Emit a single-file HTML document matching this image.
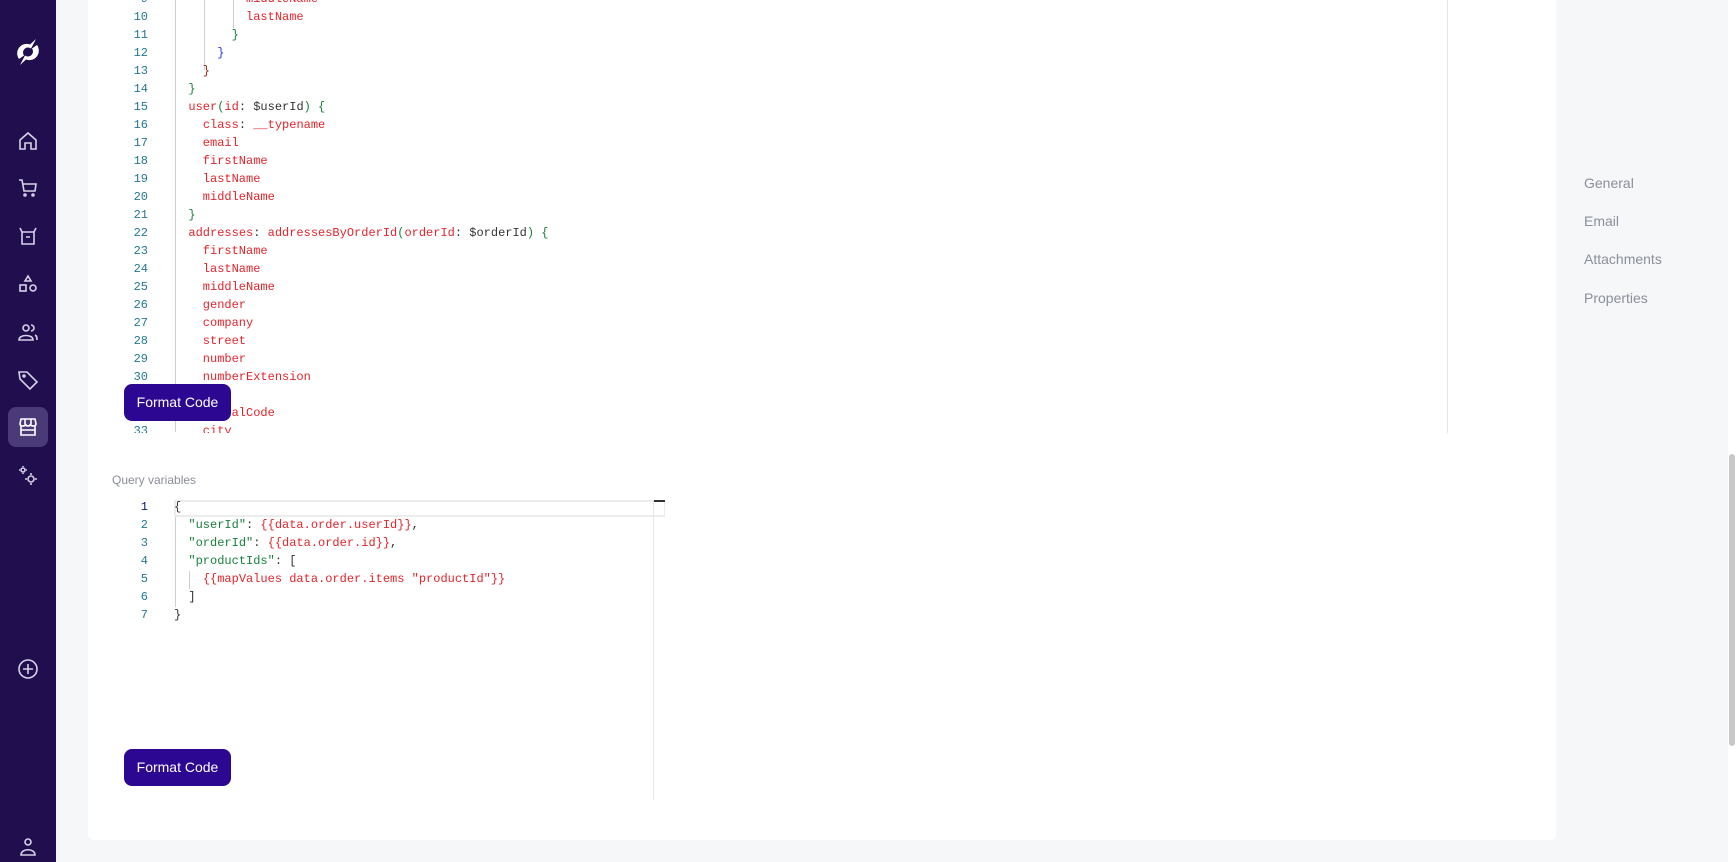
<!DOCTYPE html>
<html><head><meta charset="utf-8"><style>
*{margin:0;padding:0;box-sizing:border-box}
body{width:1736px;height:862px;overflow:hidden;background:#f6f7f9;font-family:"Liberation Sans",sans-serif;position:relative}
#side{position:absolute;left:0;top:0;width:56px;height:862px;background:#200e4f}
.ic{position:absolute;left:16px;width:24px;height:24px}
#card{position:absolute;left:88px;top:0;width:1468px;height:840px;background:#fff;border-radius:0 0 6px 6px}
.code{position:absolute;font-family:"Liberation Mono",monospace;font-size:12px;white-space:pre;line-height:18px}
.ln{position:absolute;left:112px;width:36px;text-align:right;color:#237893;font-family:"Liberation Mono",monospace;font-size:12px;line-height:18px;white-space:pre}
.r{color:#e3242b}.g{color:#16823a}.k{color:#333}.b{color:#2b3ae0}.br{color:#9c2a16}
.btn{position:absolute;left:124px;width:107px;height:37px;background:#2c0892;border-radius:8px;color:#fff;font-size:14px;text-align:center;line-height:37px}
.nav{position:absolute;left:1584px;color:#8b8e9c;font-size:14px}
.guide{position:absolute;width:1px;background:#cfcfcf}
</style></head><body>
<div id="side">
<svg class="ic" style="left:12px;top:36px;width:32px;height:32px" viewBox="0 0 32 32"><path d="M24 3 L18 8.5 A9.5 9.5 0 0 0 7 23 L12 19.5 A5 5 0 0 1 19 12.5 Z M8 29 L14 23.5 A9.5 9.5 0 0 0 25 9 L20 12.5 A5 5 0 0 1 13 19.5 Z" fill="#fff"/></svg>
<svg class="ic" style="top:129px" viewBox="0 0 24 24" fill="none" stroke="#d6d2e6" stroke-width="1.6"><path d="M4 11 L12 4 L20 11 V20 H15 V14 H9 V20 H4 Z"/></svg>
<svg class="ic" style="top:176px" viewBox="0 0 24 24" fill="none" stroke="#d6d2e6" stroke-width="1.6"><path d="M3 4 H6 L8 15 H19 L20 8 H7"/><circle cx="9" cy="19" r="1"/><circle cx="17" cy="19" r="1"/></svg>
<svg class="ic" style="top:224px" viewBox="0 0 24 24" fill="none" stroke="#d6d2e6" stroke-width="1.6"><path d="M4 4 L6 8 H18 L20 4 M6 8 V20 H18 V8 M10 13 H14"/></svg>
<svg class="ic" style="top:272px" viewBox="0 0 24 24" fill="none" stroke="#d6d2e6" stroke-width="1.6"><path d="M12 4 L15 9 H9 Z"/><rect x="4" y="13" width="6" height="6"/><circle cx="17" cy="16" r="3"/></svg>
<svg class="ic" style="top:320px" viewBox="0 0 24 24" fill="none" stroke="#d6d2e6" stroke-width="1.6"><circle cx="10" cy="8" r="3"/><path d="M3 20 C3 14 17 14 17 20 Z M15 5 A3 3 0 0 1 15 11 M19 15 C21 16 21 18 21 20"/></svg>
<svg class="ic" style="top:368px" viewBox="0 0 24 24" fill="none" stroke="#d6d2e6" stroke-width="1.6"><path d="M3 4 H11 L21 14 L14 21 L4 11 Z"/><circle cx="8" cy="8" r="1"/></svg>
<div style="position:absolute;left:8px;top:407px;width:40px;height:40px;border-radius:8px;background:#4a3a78"></div>
<svg class="ic" style="top:415px" viewBox="0 0 24 24" fill="none" stroke="#fff" stroke-width="1.6"><path d="M4 9 L5 4 H19 L20 9 Q20 11 17 11 Q15 11 14.5 9 Q14 11 12 11 Q10 11 9.5 9 Q9 11 7 11 Q4 11 4 9 Z M5 11 V20 H19 V11 M5 15 H19 M9 4 V9 M15 4 V9"/></svg>
<svg class="ic" style="top:464px" viewBox="0 0 24 24" fill="none" stroke="#d6d2e6" stroke-width="1.6"><circle cx="7" cy="6" r="2"/><circle cx="15" cy="15" r="3"/><path d="M15 9 V11 M15 19 V21 M9 15 H11 M19 15 H21 M7 2 V3 M7 9 V10 M3 6 H4 M10 6 H11"/></svg>
<svg class="ic" style="top:657px" viewBox="0 0 24 24" fill="none" stroke="#d6d2e6" stroke-width="1.6"><circle cx="12" cy="12" r="9"/><path d="M12 7 V17 M7 12 H17"/></svg>
<svg class="ic" style="top:835px" viewBox="0 0 24 24" fill="none" stroke="#d6d2e6" stroke-width="1.6"><circle cx="12" cy="7" r="3"/><path d="M5 20 C5 13 19 13 19 20 Z"/></svg>
</div>
<div id="card"></div>

<div class="guide" style="left:175px;top:0;height:432px"></div>
<div class="guide" style="left:204px;top:0;height:70px"></div>
<div class="guide" style="left:233px;top:0;height:28px"></div>
<div style="position:absolute;left:1447px;top:0;width:1px;height:433px;background:#e6e6e6"></div>
<div class="ln" style="top:-10px">9
10
11
12
13
14
15
16
17
18
19
20
21
22
23
24
25
26
27
28
29
30
31
32
33</div>
<div class="code" style="left:174px;top:-10px"><span class="r">          middleName</span>
<span class="r">          lastName</span>
<span class="g">        }</span>
<span class="b">      }</span>
<span class="br">    }</span>
<span class="g">  }</span>
  <span class="r">user</span><span class="g">(</span><span class="r">id</span><span class="k">: $userId</span><span class="g">) {</span>
    <span class="r">class</span><span class="k">: </span><span class="r">__typename</span>
<span class="r">    email</span>
<span class="r">    firstName</span>
<span class="r">    lastName</span>
<span class="r">    middleName</span>
<span class="g">  }</span>
  <span class="r">addresses</span><span class="k">: </span><span class="r">addressesByOrderId</span><span class="g">(</span><span class="r">orderId</span><span class="k">: $orderId</span><span class="g">) {</span>
<span class="r">    firstName</span>
<span class="r">    lastName</span>
<span class="r">    middleName</span>
<span class="r">    gender</span>
<span class="r">    company</span>
<span class="r">    street</span>
<span class="r">    number</span>
<span class="r">    numberExtension</span>
<span class="r">    zip</span>
<span class="r">    postalCode</span>
<span class="r">    city</span></div>
<div style="position:absolute;left:88px;top:433px;width:1468px;height:20px;background:#fff"></div>
<div class="btn" style="top:384px">Format Code</div>

<div style="position:absolute;left:112px;top:473px;font-size:12px;color:#8b8e9c">Query variables</div>

<div style="position:absolute;left:174px;top:500px;width:491px;height:17px;border:2px solid #ececec;border-right-width:1px"></div>
<div style="position:absolute;left:653px;top:500px;width:12px;height:2px;background:#333"></div>
<div style="position:absolute;left:653px;top:500px;width:1px;height:300px;background:#e6e6e6"></div>
<div class="guide" style="left:175px;top:517px;height:90px"></div>
<div class="guide" style="left:189px;top:571px;height:18px"></div>
<div class="ln" style="top:498px"><span style="color:#0b216f">1</span>
2
3
4
5
6
7</div>
<div class="code" style="left:174px;top:498px"><span class="k">{</span>
  <span class="g">"userId"</span><span class="k">: </span><span class="r">{{data.order.userId}}</span><span class="k">,</span>
  <span class="g">"orderId"</span><span class="k">: </span><span class="r">{{data.order.id}}</span><span class="k">,</span>
  <span class="g">"productIds"</span><span class="k">: [</span>
    <span class="r">{{mapValues data.order.items "productId"}}</span>
<span class="k">  ]</span>
<span class="k">}</span></div>
<div class="btn" style="top:749px">Format Code</div>

<div class="nav" style="top:175px">General</div>
<div class="nav" style="top:213px">Email</div>
<div class="nav" style="top:251px">Attachments</div>
<div class="nav" style="top:290px">Properties</div>

<div style="position:absolute;left:1728px;top:0;width:8px;height:862px;background:#fff"></div>
<div style="position:absolute;left:1729px;top:454px;width:6px;height:292px;background:#c8c8c8;border-radius:3px"></div>
</body></html>
